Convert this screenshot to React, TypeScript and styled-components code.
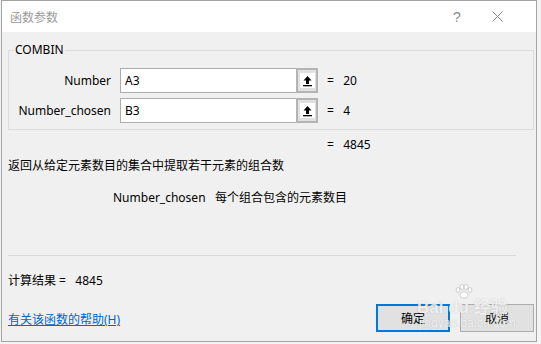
import React from "react";
import styled, { createGlobalStyle } from "styled-components";

const GlobalStyle = createGlobalStyle`
  html, body {
    margin: 0;
    padding: 0;
    background: #f4f4f4;
  }
  body {
    font-family: "Noto Sans", "Noto Sans CJK SC", sans-serif;
    font-size: 12px;
    color: #000;
  }
`;

const Dialog = styled.div`
  position: relative;
  box-sizing: border-box;
  width: 536px;
  height: 342px;
  margin-left: 1px;
  border: 1px solid #a3a3a3;
  background: #f0f0f0;
  display: flex;
  flex-direction: column;
`;

const TitleBar = styled.div`
  height: 31px;
  background: #fff;
  display: flex;
  align-items: center;
  padding: 0 19px 0 8px;
  color: #9a9a9a;
  font-size: 12px;
`;

const TitleText = styled.span`
  flex: 1;
  font-family: "Noto Sans CJK SC", sans-serif;
`;

const TitleButton = styled.span`
  width: 40px;
  display: flex;
  justify-content: center;
  color: #8a8a8a;
  font-size: 14px;
  font-family: "Liberation Sans", sans-serif;
`;

const Body = styled.div`
  flex: 1;
  display: flex;
  flex-direction: column;
  padding: 0 2px 0 6px;
`;

const Group = styled.fieldset`
  margin: 11px 0 0 0;
  padding: 11px 0 6px 0;
  border: 1px solid #dcdcdc;
  display: flex;
  flex-direction: column;
  gap: 5px;
`;

const Legend = styled.legend`
  padding: 0 1px;
  margin-left: 5px;
  font-size: 12px;
  line-height: 14px;
`;

const Row = styled.div`
  display: flex;
  align-items: center;
  height: 25px;
`;

const Label = styled.span`
  width: 102px;
  text-align: right;
  padding-right: 9px;
`;

const Field = styled.div`
  box-sizing: border-box;
  width: 198px;
  height: 25px;
  display: flex;
  border: 1px solid #adadad;
  background: #fff;
`;

const FieldText = styled.span`
  flex: 1;
  padding-left: 4px;
  line-height: 23px;
`;

const Collapse = styled.div`
  box-sizing: border-box;
  width: 22px;
  margin: -1px -1px -1px 0;
  border: 2px solid #b4b4b4;
  background: #e1e1e1;
  display: flex;
  align-items: center;
  justify-content: center;
`;

const IconBox = styled.span`
  width: 15px;
  height: 15px;
  background: #fff;
  display: flex;
  align-items: center;
  justify-content: center;
`;

const Value = styled.span<{ $left?: number }>`
  margin-left: ${(p) => p.$left ?? 9}px;
  white-space: pre;
`;

const ResultLine = styled.div`
  margin-top: 7px;
  padding-left: 319px;
  line-height: 16px;
  white-space: pre;
`;

const Desc = styled.div<{ $top: number; $indent?: number }>`
  margin-top: ${(p) => p.$top}px;
  padding-left: ${(p) => p.$indent ?? 0}px;
  line-height: 16px;
  white-space: pre;
`;

const Separator = styled.div`
  margin-top: 49px;
  margin-right: 18px;
  height: 1px;
  background: #d9d9d9;
`;

const Footer = styled.div`
  margin-top: 15px;
  display: flex;
  align-items: flex-start;
`;

const HelpLink = styled.a`
  flex: 1;
  margin-top: 8px;
  line-height: 16px;
  color: #0066cc;
  text-decoration: underline;
  cursor: pointer;
`;

const Button = styled.button<{ $primary?: boolean }>`
  box-sizing: border-box;
  width: 74px;
  height: 28px;
  margin-left: 10px;
  background: #e1e1e1;
  border: ${(p) => (p.$primary ? "2px solid #0078d7" : "1px solid #adadad")};
  font: inherit;
  color: #000;
  padding: 0;
`;

/* faint site watermark lying over the buttons */
const Watermark = styled.div`
  position: absolute;
  left: 415px;
  top: 283px;
  pointer-events: none;
  white-space: nowrap;
  color: rgba(255, 255, 255, 0.8);
  text-shadow: 0 0 1px rgba(130, 130, 130, 0.5);
  font-family: "Liberation Sans", "Noto Sans CJK SC", sans-serif;
  display: flex;
  flex-direction: column;
  align-items: flex-start;
`;

const Paw = styled.svg`
  margin-left: 38px;
`;

const WatermarkBrand = styled.div`
  font-size: 17px;
  font-weight: bold;
  line-height: 18px;
`;

const WatermarkSite = styled.div`
  font-size: 12px;
  line-height: 13px;
  padding-left: 2px;
`;

const UpIcon = () => (
  <svg width="11" height="12" viewBox="0 0 11 12">
    <path d="M5.5 1 L1.5 5.5 H4 V9 H7 V5.5 H9.5 Z" fill="#000" />
    <rect x="1" y="10" width="9" height="1.3" fill="#000" />
  </svg>
);

const CloseIcon = () => (
  <svg width="11" height="11" viewBox="0 0 11 11">
    <path d="M0.5 0.5 L10.5 10.5 M10.5 0.5 L0.5 10.5" stroke="#8a8a8a" strokeWidth="1" />
  </svg>
);

const args = [
  { name: "Number", ref: "A3", value: "20" },
  { name: "Number_chosen", ref: "B3", value: "4" },
];

export default function App() {
  return (
    <>
      <GlobalStyle />
      <Dialog>
        <TitleBar>
          <TitleText>函数参数</TitleText>
          <TitleButton>?</TitleButton>
          <TitleButton>
            <CloseIcon />
          </TitleButton>
        </TitleBar>
        <Body>
          <Group>
            <Legend>COMBIN</Legend>
            {args.map((a) => (
              <Row key={a.name}>
                <Label>{a.name}</Label>
                <Field>
                  <FieldText>{a.ref}</FieldText>
                  <Collapse>
                    <IconBox>
                      <UpIcon />
                    </IconBox>
                  </Collapse>
                </Field>
                <Value>{"=   " + a.value}</Value>
              </Row>
            ))}
          </Group>
          <ResultLine>{"=   4845"}</ResultLine>
          <Desc $top={5}>返回从给定元素数目的集合中提取若干元素的组合数</Desc>
          <Desc $top={16} $indent={105}>
            {"Number_chosen   每个组合包含的元素数目"}
          </Desc>
          <Separator />
          <Desc $top={17}>{"计算结果 =   4845"}</Desc>
          <Footer>
            <HelpLink>有关该函数的帮助(H)</HelpLink>
            <Button $primary>确定</Button>
            <Button>取消</Button>
          </Footer>
        </Body>
        <Watermark>
          <Paw width="18" height="15" viewBox="0 0 18 15">
            <g fill="rgba(255,255,255,0.85)" stroke="rgba(140,140,140,0.45)" strokeWidth="0.8">
              <ellipse cx="3" cy="6" rx="2" ry="2.5" />
              <ellipse cx="7" cy="3" rx="2" ry="2.5" />
              <ellipse cx="11" cy="3" rx="2" ry="2.5" />
              <ellipse cx="15" cy="6" rx="2" ry="2.5" />
              <ellipse cx="9" cy="11" rx="4" ry="3.3" />
            </g>
          </Paw>
          <WatermarkBrand>Bai du 经验</WatermarkBrand>
          <WatermarkSite>jingyan.baidu.com</WatermarkSite>
        </Watermark>
      </Dialog>
    </>
  );
}
